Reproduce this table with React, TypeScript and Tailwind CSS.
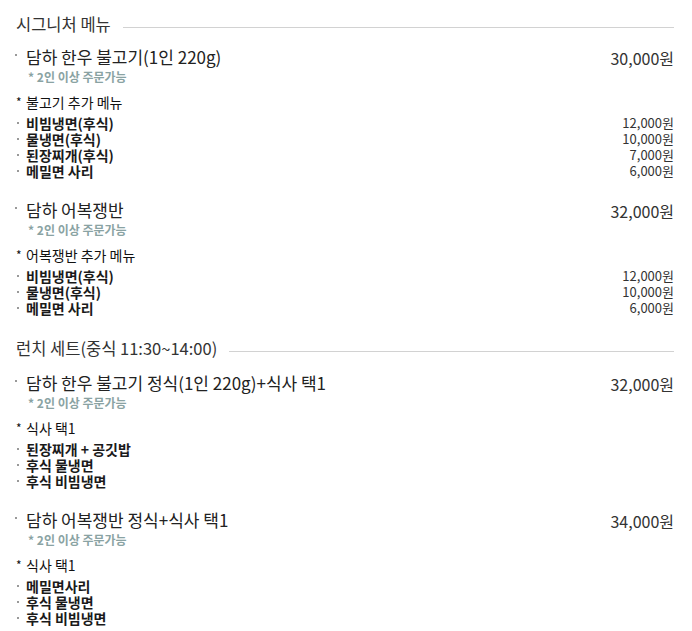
import React from "react";

type Sub = { name: string; price?: string };
type Group = { title: string; price: string; header: string; subs: Sub[] };
type Section = { heading: string; groups: Group[] };

const data: Section[] = [
  {
    heading: "시그니처 메뉴",
    groups: [
      {
        title: "담하 한우 불고기(1인 220g)",
        price: "30,000원",
        header: "불고기 추가 메뉴",
        subs: [
          { name: "비빔냉면(후식)", price: "12,000원" },
          { name: "물냉면(후식)", price: "10,000원" },
          { name: "된장찌개(후식)", price: "7,000원" },
          { name: "메밀면 사리", price: "6,000원" },
        ],
      },
      {
        title: "담하 어복쟁반",
        price: "32,000원",
        header: "어복쟁반 추가 메뉴",
        subs: [
          { name: "비빔냉면(후식)", price: "12,000원" },
          { name: "물냉면(후식)", price: "10,000원" },
          { name: "메밀면 사리", price: "6,000원" },
        ],
      },
    ],
  },
  {
    heading: "런치 세트(중식 11:30~14:00)",
    groups: [
      {
        title: "담하 한우 불고기 정식(1인 220g)+식사 택1",
        price: "32,000원",
        header: "식사 택1",
        subs: [{ name: "된장찌개 + 공깃밥" }, { name: "후식 물냉면" }, { name: "후식 비빔냉면" }],
      },
      {
        title: "담하 어복쟁반 정식+식사 택1",
        price: "34,000원",
        header: "식사 택1",
        subs: [{ name: "메밀면사리" }, { name: "후식 물냉면" }, { name: "후식 비빔냉면" }],
      },
    ],
  },
];

function GroupBlock({ g, first, afterHeading }: { g: Group; first: boolean; afterHeading: number }) {
  return (
    <div className={first ? (afterHeading === 0 ? "mt-[10px]" : "mt-[12px]") : "mt-[20px]"}>
      <div className="flex items-start h-[22px]">
        <span className="w-[10px] shrink-0 flex">
          <span className="block w-[2px] h-[2px] bg-[#999] mt-[8px] ml-[-1px]" />
        </span>
        <span className="flex-1 text-[17px] leading-[22px] text-[#222]">{g.title}</span>
        <span className="text-[16px] leading-[22px] text-[#333] mt-[1px]">{g.price}</span>
      </div>
      <div className="mt-[1px] pl-[12px] text-[12px] leading-[16px] font-bold text-[#8aa3a3]">* 2인 이상 주문가능</div>
      <div className="mt-[9px] flex items-center h-[16px] text-[14px] leading-[16px] text-[#111]">
        <span className="w-[10px] shrink-0 text-[12px]">*</span>
        <span>{g.header}</span>
      </div>
      <div className="mt-[5px]">
        {g.subs.map((s, i) => (
          <div key={i} className="flex items-center h-[16px] leading-[16px]">
            <span className="w-[10px] shrink-0 flex items-center">
              <span className="block w-[2px] h-[2px] bg-[#999] ml-[1px]" />
            </span>
            <span className="flex-1 text-[14px] font-semibold text-[#1a1a1a]">{s.name}</span>
            {s.price && <span className="text-[13px] text-[#333]">{s.price}</span>}
          </div>
        ))}
      </div>
    </div>
  );
}

export default function App() {
  return (
    <div
      className="w-[692px] h-[631px] bg-white pl-[16px] pr-[18px] pt-[12px] overflow-hidden"
      style={{ fontFamily: '"Noto Sans CJK KR", "Noto Sans", sans-serif' }}
    >
      {data.map((sec, si) => (
        <div key={si} className={si === 0 ? "" : "mt-[20px]"}>
          <div className="flex items-center h-[24px]">
            <span className="text-[16.5px] leading-[24px] text-[#333]">{sec.heading}</span>
            <span className="flex-1 h-px bg-[#d2d2d2] ml-[12px] mt-[6px]" />
          </div>
          {sec.groups.map((g, gi) => (
            <GroupBlock key={gi} g={g} first={gi === 0} afterHeading={si} />
          ))}
        </div>
      ))}
    </div>
  );
}
